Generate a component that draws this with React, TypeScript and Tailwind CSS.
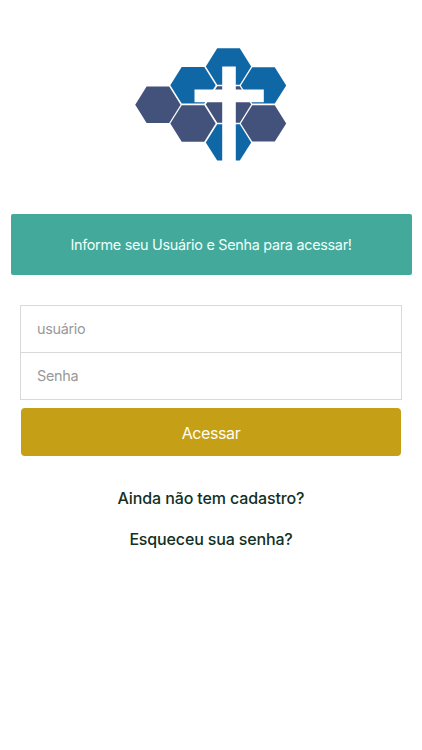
function Logo() {
  const hex = (cx: number, cy: number) =>
    `${cx - 22.7},${cy} ${cx - 11.3},${cy - 18.2} ${cx + 11.3},${cy - 18.2} ${cx + 22.7},${cy} ${cx + 11.3},${cy + 18.2} ${cx - 11.3},${cy + 18.2}`;
  const blue = [[228.5, 66.5], [263.5, 85.4], [193, 85.3], [228.5, 142.4]];
  const purple = [[157.9, 104.7], [193, 123.5], [228.5, 104.5], [263.5, 123.4]];
  return (
    <svg className="block h-[114px] w-[154px]" viewBox="134 47 154 114" aria-label="Logo">
      {blue.map(([x, y]) => <polygon key={`${x}-${y}`} points={hex(x, y)} fill="#1067a5" />)}
      {purple.map(([x, y]) => <polygon key={`${x}-${y}`} points={hex(x, y)} fill="#43527b" />)}
      <path d="M222.2 66.5h13.6v23h28v12.8h-28V162h-13.6v-59.7h-27.7V89.5h27.7z" fill="white" />
    </svg>
  );
}

export default function App() {
  return (
    <main className="flex h-[750px] w-full flex-col items-center overflow-hidden bg-white pt-[47px] font-['Inter','Liberation_Sans',sans-serif]">
      <Logo />
      <p className="mt-[53px] flex h-[61px] w-[401px] items-center justify-center rounded-[2px] bg-[#42a99b] text-[14.4px] tracking-[-0.29px] text-[#effffc]">
        Informe seu Usuário e Senha para acessar!
      </p>
      <form className="mt-[30px] flex w-[382px] flex-col items-center">
        <input
          className="h-[48px] w-full border border-[#d9d9d9] px-4 pb-px text-[14.4px] tracking-[-0.3px] outline-none placeholder:text-[#999999]"
          placeholder="usuário"
        />
        <input
          type="password"
          className="-mt-px h-[48px] w-full border border-[#d9d9d9] px-4 pb-px text-[14.4px] tracking-[-0.3px] outline-none placeholder:text-[#999999]"
          placeholder="Senha"
        />
        <button type="button" className="mt-[8px] h-[48px] w-[380px] rounded-[4px] bg-[#c5a016] pt-px text-[16px] tracking-[-0.38px] text-[#fffdf0]">
          Acessar
        </button>
      </form>
      <a className="mt-[30px] text-[16px] leading-6 font-medium tracking-[-0.12px] text-[#12301f]">Ainda não tem cadastro?</a>
      <a className="mt-[17px] text-[16px] leading-6 font-medium tracking-[-0.15px] text-[#12301f]">Esqueceu sua senha?</a>
    </main>
  );
}
